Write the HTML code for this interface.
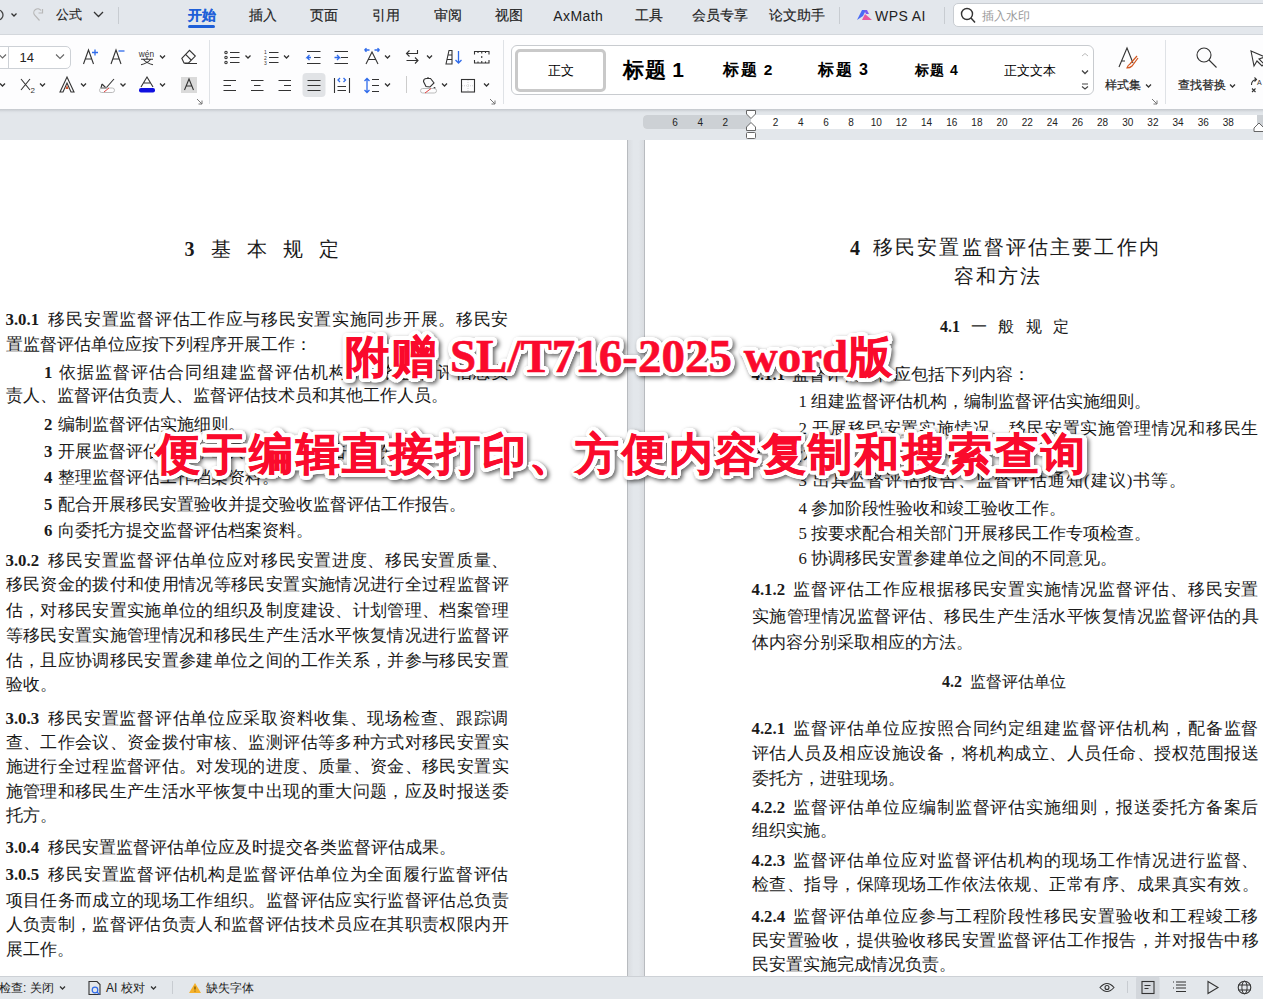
<!DOCTYPE html><html><head><meta charset="utf-8"><style>
*{box-sizing:border-box;margin:0;padding:0}
html,body{width:1263px;height:999px;overflow:hidden}
body{position:relative;background:#e3e7eb;font-family:"Liberation Sans",sans-serif;color:#222}
.a{position:absolute}
.ui{font-family:"Liberation Sans",sans-serif;white-space:nowrap}
.doc{font-family:"Liberation Serif",serif;font-size:16.8px;line-height:20px;color:#1a1a1a;white-space:nowrap}
.j{text-align:justify;text-align-last:justify}
.doc b{font-weight:bold}
.doc i{font-style:normal;font-weight:bold;margin-right:4.5px}
.rp i{margin-right:3px}
.doc u{text-decoration:none;margin-right:1px}
svg{position:absolute;overflow:visible}
.ov{font-family:"Liberation Serif",serif;font-weight:bold;font-size:46px;line-height:50px;white-space:nowrap}
.ovs{color:#fff;-webkit-text-stroke:1.5px #fff;text-shadow:4.30px 0.00px 0 #fff,4.19px 0.96px 0 #fff,3.87px 1.87px 0 #fff,3.36px 2.68px 0 #fff,2.68px 3.36px 0 #fff,1.87px 3.87px 0 #fff,0.96px 4.19px 0 #fff,0.00px 4.30px 0 #fff,-0.96px 4.19px 0 #fff,-1.87px 3.87px 0 #fff,-2.68px 3.36px 0 #fff,-3.36px 2.68px 0 #fff,-3.87px 1.87px 0 #fff,-4.19px 0.96px 0 #fff,-4.30px 0.00px 0 #fff,-4.19px -0.96px 0 #fff,-3.87px -1.87px 0 #fff,-3.36px -2.68px 0 #fff,-2.68px -3.36px 0 #fff,-1.87px -3.87px 0 #fff,-0.96px -4.19px 0 #fff,-0.00px -4.30px 0 #fff,0.96px -4.19px 0 #fff,1.87px -3.87px 0 #fff,2.68px -3.36px 0 #fff,3.36px -2.68px 0 #fff,3.87px -1.87px 0 #fff,4.19px -0.96px 0 #fff,3.00px 0.00px 0 #fff,2.77px 1.15px 0 #fff,2.12px 2.12px 0 #fff,1.15px 2.77px 0 #fff,0.00px 3.00px 0 #fff,-1.15px 2.77px 0 #fff,-2.12px 2.12px 0 #fff,-2.77px 1.15px 0 #fff,-3.00px 0.00px 0 #fff,-2.77px -1.15px 0 #fff,-2.12px -2.12px 0 #fff,-1.15px -2.77px 0 #fff,-0.00px -3.00px 0 #fff,1.15px -2.77px 0 #fff,2.12px -2.12px 0 #fff,2.77px -1.15px 0 #fff,1.60px 0.00px 0 #fff,1.29px 0.94px 0 #fff,0.49px 1.52px 0 #fff,-0.49px 1.52px 0 #fff,-1.29px 0.94px 0 #fff,-1.60px 0.00px 0 #fff,-1.29px -0.94px 0 #fff,-0.49px -1.52px 0 #fff,0.49px -1.52px 0 #fff,1.29px -0.94px 0 #fff;filter:drop-shadow(2px 2.5px 2px rgba(0,0,0,.6))}
.ovf{color:#fa0a2c;-webkit-text-stroke:0.6px #fa0a2c}
</style></head><body>
<div class="a" style="left:0;top:0;width:1263px;height:34px;background:#e3e7ec"></div>
<div class="a" style="left:0;top:34px;width:1263px;height:1px;background:#d3d7dc"></div>
<div class="a ui" style="left:187.5px;top:6.5px;font-size:13.5px;line-height:17.5px;color:#1e5fd8;font-weight:bold;-webkit-text-stroke:0.15px #1e5fd8">开始</div>
<div class="a ui" style="left:249.1px;top:6.5px;font-size:13.5px;line-height:17.5px;color:#222;font-weight:normal;-webkit-text-stroke:0.15px #222">插入</div>
<div class="a ui" style="left:310.3px;top:6.5px;font-size:13.5px;line-height:17.5px;color:#222;font-weight:normal;-webkit-text-stroke:0.15px #222">页面</div>
<div class="a ui" style="left:372.2px;top:6.5px;font-size:13.5px;line-height:17.5px;color:#222;font-weight:normal;-webkit-text-stroke:0.15px #222">引用</div>
<div class="a ui" style="left:433.5px;top:6.5px;font-size:13.5px;line-height:17.5px;color:#222;font-weight:normal;-webkit-text-stroke:0.15px #222">审阅</div>
<div class="a ui" style="left:495.2px;top:6.5px;font-size:13.5px;line-height:17.5px;color:#222;font-weight:normal;-webkit-text-stroke:0.15px #222">视图</div>
<div class="a ui" style="left:553.3px;top:6.5px;font-size:14px;line-height:18px;color:#222;font-weight:normal;letter-spacing:0.4px">AxMath</div>
<div class="a ui" style="left:634.7px;top:6.5px;font-size:13.5px;line-height:17.5px;color:#222;font-weight:normal;-webkit-text-stroke:0.15px #222">工具</div>
<div class="a ui" style="left:691.5px;top:6.5px;font-size:13.5px;line-height:17.5px;color:#222;font-weight:normal;-webkit-text-stroke:0.15px #222">会员专享</div>
<div class="a ui" style="left:769.3px;top:6.5px;font-size:13.5px;line-height:17.5px;color:#222;font-weight:normal;-webkit-text-stroke:0.15px #222">论文助手</div>
<div class="a ui" style="left:875.1px;top:6.5px;font-size:14px;line-height:18px;color:#222;font-weight:normal;letter-spacing:0.4px">WPS AI</div>
<div class="a" style="left:188px;top:25px;width:27px;height:3px;border-radius:2px;background:#1e5fd8"></div>
<div class="a ui" style="left:56px;top:7px;font-size:12.5px;line-height:16.5px;color:#222;font-weight:normal;-webkit-text-stroke:0.15px #222">公式</div>
<div class="a" style="left:118px;top:7px;width:1px;height:17px;background:#c8ccd1"></div>
<div class="a" style="left:838.5px;top:7px;width:1px;height:17px;background:#c8ccd1"></div>
<div class="a" style="left:943.5px;top:7px;width:1px;height:17px;background:#c8ccd1"></div>
<div class="a" style="left:953px;top:3px;width:320px;height:24px;background:#fff;border:1px solid #c9cdd2;border-radius:5px"></div>
<div class="a ui" style="left:982px;top:7.5px;font-size:12.3px;line-height:16.3px;color:#999;font-weight:normal;">插入水印</div>
<svg style="left:0;top:0" width="1263" height="34">
<path d="M-2 10 a5 5 0 1 1 0 10" fill="none" stroke="#444" stroke-width="1.3"/>
<path d="M11.5 13.5 l2.5 2.5 l2.5-2.5" fill="none" stroke="#333" stroke-width="1.3"/>
<path d="M39.5 20.5 L34.5 15 a3.6 3.6 0 0 1 6.5 -4.5" fill="none" stroke="#b8b8b8" stroke-width="1.2"/><path d="M42.5 9 v4 h-4" fill="none" stroke="#b8b8b8" stroke-width="1.2"/>
<path d="M94 12 l4.5 4.5 l4.5-4.5" fill="none" stroke="#333" stroke-width="1.3"/>
<path d="M857 20 l5-10 l4 0 l-3 6 z" fill="#4b6bf5"/><path d="M862 20 l3-6 l7 6 z" fill="#e85aa0"/><path d="M864 10 l3 0 l2 4 l-3 0z" fill="#7a5cf0"/>
<circle cx="967" cy="14" r="5.5" fill="none" stroke="#333" stroke-width="1.4"/><path d="M971 18 l4 4.5" stroke="#333" stroke-width="1.5"/>
</svg>
<div class="a" style="left:0;top:35px;width:1263px;height:74px;background:#fdfdfe"></div>
<div class="a" style="left:208.5px;top:40px;width:1px;height:64px;background:#dfe2e6"></div>
<div class="a" style="left:502.5px;top:40px;width:1px;height:64px;background:#dfe2e6"></div>
<div class="a" style="left:1164.5px;top:40px;width:1px;height:64px;background:#dfe2e6"></div>
<div class="a" style="left:-10px;top:45.5px;width:81px;height:23px;border:1px solid #cdd1d6;border-radius:5px;background:#fff"></div>
<div class="a" style="left:8px;top:46px;width:1px;height:22px;background:#cdd1d6"></div>
<div class="a ui" style="left:19.5px;top:49px;font-size:13px;line-height:17px;color:#222;font-weight:normal;">14</div>
<div class="a" style="left:511px;top:45px;width:583px;height:50px;border:1px solid #c8cbcf;border-radius:6px;background:#fff"></div>
<div class="a" style="left:514.5px;top:48.5px;width:91px;height:43px;border:3px solid #c9c9c9;border-radius:5px;background:#fff"></div>
<div class="a ui" style="left:547.5px;top:63px;font-size:12.5px;line-height:16.5px;color:#000;font-weight:normal;">正文</div>
<div class="a ui" style="left:623px;top:57px;font-size:21px;line-height:25px;color:#000;font-weight:bold;letter-spacing:0.5px">标题 1</div>
<div class="a ui" style="left:723px;top:60px;font-size:15.5px;line-height:19.5px;color:#000;font-weight:bold;letter-spacing:1.5px">标题 2</div>
<div class="a ui" style="left:818px;top:59.5px;font-size:16px;line-height:20px;color:#000;font-weight:bold;letter-spacing:1.5px">标题 3</div>
<div class="a ui" style="left:915px;top:61px;font-size:14px;line-height:18px;color:#000;font-weight:bold;letter-spacing:1px">标题 4</div>
<div class="a ui" style="left:1004px;top:63px;font-size:12.5px;line-height:16.5px;color:#000;font-weight:normal;">正文文本</div>
<div class="a ui" style="left:1105px;top:77px;font-size:12px;line-height:16px;color:#222;font-weight:normal;-webkit-text-stroke:0.2px #222">样式集</div>
<div class="a ui" style="left:1178px;top:77px;font-size:12px;line-height:16px;color:#222;font-weight:normal;-webkit-text-stroke:0.2px #222">查找替换</div>
<svg style="left:0;top:0" width="1263" height="110"><path d="M83.5 64 L88.5 50 L93.5 64 M85.5 59 h6" stroke="#333" stroke-width="1.1" fill="none"/><path d="M92 52.5 h6 M95 49.5 v6" stroke="#2f6bea" stroke-width="1.3" fill="none"/><path d="M111 64 L116 50 L121 64 M113 59 h6" stroke="#333" stroke-width="1.1" fill="none"/><path d="M118.5 51 h6" stroke="#2f6bea" stroke-width="1.3" fill="none"/><path d="M141 59.3 h12 M147 57.3 v2 M143.5 59.5 q3 3.8 9.5 5.2 M150.5 59.5 q-3 3.8 -9.5 5.2" stroke="#333" stroke-width="1.1" fill="none"/><text x="138.8" y="56.6" font-size="8.3" fill="#333" font-family="Liberation Sans">w&#233;n</text><path d="M160 55.5 l2.5 2.5 l2.5 -2.5" fill="none" stroke="#333" stroke-width="1.3"/><path d="M181.8 58.3 l7.7-8 l5.8 5.8 l-6.7 6.9 h-4.6 z M185.6 54.3 l5.5 5.7" stroke="#333" stroke-width="1.1" fill="none"/><path d="M184.5 63.5 h12.5" stroke="#333" stroke-width="1"/><path d="M0 83.5 l2.5 2.5 l2.5 -2.5" fill="none" stroke="#333" stroke-width="1.3"/><path d="M21 79 l9 11 M30 79 l-9 11" stroke="#333" stroke-width="1.1" fill="none"/><text x="30.5" y="93" font-size="8" fill="#333" font-family="Liberation Sans">2</text><path d="M40 83.5 l2.5 2.5 l2.5 -2.5" fill="none" stroke="#333" stroke-width="1.3"/><path d="M60 92 L67 77 L74 92 h-3 l-4-9 l-4 9 z" stroke="#333" stroke-width="1.1" fill="none"/><path d="M65.5 89 l1.5-4 l1.5 4z" fill="#d2502a"/><path d="M81 83.5 l2.5 2.5 l2.5 -2.5" fill="none" stroke="#333" stroke-width="1.3"/><path d="M102 84 l4 4 l8-9 M102 84 l-1 4 h5" stroke="#333" stroke-width="1.1" fill="none"/><rect x="99.5" y="88" width="15" height="4.5" rx="2.2" fill="none" stroke="#bbb" stroke-width="1"/><path d="M104 92 l5-4" stroke="#e04040" stroke-width="1"/><path d="M120.5 83.5 l2.5 2.5 l2.5 -2.5" fill="none" stroke="#333" stroke-width="1.3"/><path d="M141 87 L147 77 L153 87 M143.5 83 h7" stroke="#333" stroke-width="1.1" fill="none"/><rect x="139" y="88" width="16" height="4.5" rx="2" fill="#1010e0"/><path d="M160 83.5 l2.5 2.5 l2.5 -2.5" fill="none" stroke="#333" stroke-width="1.3"/><rect x="181" y="77" width="16" height="16" fill="#dadada"/><path d="M184.5 90 L189 79 L193.5 90 M186 86 h6" stroke="#333" stroke-width="1.1" fill="none"/><path d="M197 99 l5 5 M202 100.5 v3.5 h-3.5" stroke="#777" stroke-width="1" fill="none"/><path d="M56 54.5 l4 4 l4 -4" fill="none" stroke="#666" stroke-width="1.1"/><path d="M-1 54.5 l3.5 3.5 l3.5 -3.5" fill="none" stroke="#666" stroke-width="1.1"/><circle cx="226" cy="52.5" r="1.2" stroke="#333" stroke-width="1.1" fill="none"/><circle cx="226" cy="57.5" r="1.2" stroke="#333" stroke-width="1.1" fill="none"/><circle cx="226" cy="62.5" r="1.2" stroke="#333" stroke-width="1.1" fill="none"/><path d="M230 52.5 h9.5 M230 57.5 h9.5 M230 62.5 h9.5" stroke="#333" stroke-width="1.1" fill="none"/><path d="M245.5 55.5 l2.5 2.5 l2.5 -2.5" fill="none" stroke="#333" stroke-width="1.3"/><text x="264" y="54" font-size="5" fill="#333" font-family="Liberation Sans">1</text><text x="264" y="59.5" font-size="5" fill="#333" font-family="Liberation Sans">2</text><text x="264" y="65" font-size="5" fill="#333" font-family="Liberation Sans">3</text><path d="M269 52.5 h9.5 M269 57.5 h9.5 M269 62.5 h9.5" stroke="#333" stroke-width="1.1" fill="none"/><path d="M284 55.5 l2.5 2.5 l2.5 -2.5" fill="none" stroke="#333" stroke-width="1.3"/><path d="M307 51.5 h13.5 M314 57.5 h6.5 M307 63.5 h13.5" stroke="#333" stroke-width="1.1" fill="none"/><path d="M311 57.5 h-4 l2.5-2.5 M307 57.5 l2.5 2.5" stroke="#2f6bea" stroke-width="1.3" fill="none"/><path d="M334.5 51.5 h13.5 M341 57.5 h7 M334.5 63.5 h13.5" stroke="#333" stroke-width="1.1" fill="none"/><path d="M334.5 57.5 h5 l-2.5-2.5 M339.5 57.5 l-2.5 2.5" stroke="#2f6bea" stroke-width="1.3" fill="none"/><path d="M366 64 L372 52 L378 64 M368.5 59.5 h7" stroke="#333" stroke-width="1.1" fill="none"/><path d="M364.5 50 h5 M364.5 50 l2 -1.8 M364.5 50 l2 1.8 M374.5 50 h5 M379.5 50 l-2 -1.8 M379.5 50 l-2 1.8" stroke="#2f6bea" stroke-width="1.3" fill="none"/><path d="M385 55.5 l2.5 2.5 l2.5 -2.5" fill="none" stroke="#333" stroke-width="1.3"/><path d="M417.5 50 v3.5 h-11 M409.5 50.5 l-3 3 l3 3 M406.5 60.5 h11.5 M415 57.5 l3 3 l-3 3" stroke="#333" stroke-width="1.1" fill="none"/><path d="M427 55.5 l2.5 2.5 l2.5 -2.5" fill="none" stroke="#333" stroke-width="1.3"/><path d="M446 64 l3-13.5 h3 v13.5 z M448.3 55 h3.7 M447.3 59.5 h4.7" stroke="#333" stroke-width="1.1" fill="none"/><path d="M458.5 51 v12 M455.5 60 l3 3 l3 -3" stroke="#2f6bea" stroke-width="1.3" fill="none"/><path d="M474.5 54.5 v-3 h14.5 v3 M478 51.5 v1.5 M481.75 51.5 v2 M485.5 51.5 v1.5 M474.5 60 v3 h14.5 v-3 M478 63 v-1.5 M481.75 63 v-2 M485.5 63 v-1.5 M481.75 56 v2" stroke="#333" stroke-width="1.1" fill="none"/><path d="M223.5 80.5 h12.5 M223.5 85.5 h7.5 M223.5 90.5 h12.5" stroke="#333" stroke-width="1.1" fill="none"/><path d="M251 80.5 h12.5 M254 85.5 h6.5 M251 90.5 h12.5" stroke="#333" stroke-width="1.1" fill="none"/><path d="M278.5 80.5 h12.5 M284 85.5 h7 M278.5 90.5 h12.5" stroke="#333" stroke-width="1.1" fill="none"/><rect x="302.5" y="73" width="23" height="24" rx="4" fill="#e1e3e6"/><path d="M307.5 80.5 h13 M307.5 85.5 h13 M307.5 90.5 h13" stroke="#333" stroke-width="1.1" fill="none"/><path d="M334.5 78 v15 M349.5 78 v15 M337.5 86.5 h8.5 M337.5 90.5 h8.5" stroke="#333" stroke-width="1.1" fill="none"/><path d="M340 78 l-2 2 l2 2 M343.5 78 l2 2 l-2 2" stroke="#2f6bea" stroke-width="1.3" fill="none"/><path d="M367 78.5 v14 M364.5 81 l2.5-2.5 l2.5 2.5 M364.5 90 l2.5 2.5 l2.5-2.5" stroke="#2f6bea" stroke-width="1.3" fill="none"/><path d="M372 79.5 h7 M372 85.5 h7 M372 91.5 h7" stroke="#333" stroke-width="1.1" fill="none"/><path d="M385 83.5 l2.5 2.5 l2.5 -2.5" fill="none" stroke="#333" stroke-width="1.3"/><path d="M406.5 76 v17" stroke="#ccc" stroke-width="1"/><path d="M423.5 81.5 a3 3 0 0 1 3-3 l4 0 l3.5 4.5 l-4 4 l-4 -0.5 z M428 78.5 v-1.5" stroke="#333" stroke-width="1.1" fill="none"/><circle cx="434.5" cy="88" r="1" fill="#333"/><rect x="420.5" y="88.5" width="16" height="4.5" rx="2.2" fill="none" stroke="#bbb" stroke-width="1"/><path d="M425 93 l6-4.5" stroke="#e04040" stroke-width="1"/><path d="M442 83.5 l2.5 2.5 l2.5 -2.5" fill="none" stroke="#333" stroke-width="1.3"/><rect x="461.5" y="79.5" width="13" height="12.5" stroke="#333" stroke-width="1.1" fill="none"/><path d="M468 80 v11.5 M462 85.75 h12" stroke="#bbb" stroke-width=".7" stroke-dasharray="1 1"/><path d="M484 83.5 l2.5 2.5 l2.5 -2.5" fill="none" stroke="#333" stroke-width="1.3"/><path d="M490 99 l5 5 M495 100.5 v3.5 h-3.5" stroke="#777" stroke-width="1" fill="none"/><path d="M1082 56 l3 -2.5 l3 2.5" fill="none" stroke="#bbb" stroke-width="1"/><path d="M1082 70.5 l3.0 3.0 l3.0 -3.0" fill="none" stroke="#444" stroke-width="1.3"/><path d="M1082 84 h6 M1082 86.5 l3 2.5 l3 -2.5" fill="none" stroke="#444" stroke-width="1.1"/><path d="M1119 67 L1127 48 L1133 63 M1122 61 h3" stroke="#333" stroke-width="1.1" fill="none"/><path d="M1137 56 l-7 8 q-2 1 -3 4 q3 0 5 -2 l6-8" stroke="#d2561f" stroke-width="1.2" fill="none"/><path d="M1146 84.5 l2.5 2.5 l2.5 -2.5" fill="none" stroke="#333" stroke-width="1.3"/><path d="M1152 99 l5 5 M1157 100.5 v3.5 h-3.5" stroke="#777" stroke-width="1" fill="none"/><circle cx="1204" cy="55" r="7" stroke="#333" stroke-width="1.1" fill="none"/><path d="M1209 60 l7.5 7.5" stroke="#333" stroke-width="1.1" fill="none"/><path d="M1230 84.5 l2.5 2.5 l2.5 -2.5" fill="none" stroke="#333" stroke-width="1.3"/><path d="M1251 51 l14 6 l-6 2 l5 5 l-2 2 l-5-5 l-3 5 z" stroke="#333" stroke-width="1.1" fill="none"/><path d="M1251.5 85 a5 5 0 0 1 5 -5.5 M1254.5 77.5 l2 2 l-2 2 M1252 88.5 l3.5 3.5 M1255.5 88.5 l-3.5 3.5" stroke="#333" stroke-width="1.1" fill="none"/><text x="1257" y="85" font-size="7" fill="#333" font-family="Liberation Sans">A</text></svg>
<div class="a" style="left:0;top:109px;width:1263px;height:31px;background:#e3e7eb"></div>
<div class="a" style="left:0;top:109px;width:1263px;height:5px;background:linear-gradient(#c4c8cd,#dfe3e7 60%,#e3e7eb)"></div>
<div class="a" style="left:643px;top:115px;width:620px;height:14px;background:#fff;border-radius:4px 0 0 4px"></div>
<div class="a" style="left:643px;top:115px;width:108px;height:14px;background:#cdd1d5;border-radius:4px 0 0 4px"></div>
<div class="a" style="left:1257px;top:115px;width:6px;height:14px;background:#cdd1d5"></div>
<svg style="left:0;top:0" width="1263" height="140"><text x="675.0" y="125.5" text-anchor="middle" font-size="10" fill="#222" font-family="Liberation Sans">6</text><text x="700.2" y="125.5" text-anchor="middle" font-size="10" fill="#222" font-family="Liberation Sans">4</text><text x="725.4" y="125.5" text-anchor="middle" font-size="10" fill="#222" font-family="Liberation Sans">2</text><text x="775.6" y="125.5" text-anchor="middle" font-size="10" fill="#222" font-family="Liberation Sans">2</text><text x="800.8" y="125.5" text-anchor="middle" font-size="10" fill="#222" font-family="Liberation Sans">4</text><text x="826.0" y="125.5" text-anchor="middle" font-size="10" fill="#222" font-family="Liberation Sans">6</text><text x="851.1" y="125.5" text-anchor="middle" font-size="10" fill="#222" font-family="Liberation Sans">8</text><text x="876.2" y="125.5" text-anchor="middle" font-size="10" fill="#222" font-family="Liberation Sans">10</text><text x="901.4" y="125.5" text-anchor="middle" font-size="10" fill="#222" font-family="Liberation Sans">12</text><text x="926.5" y="125.5" text-anchor="middle" font-size="10" fill="#222" font-family="Liberation Sans">14</text><text x="951.7" y="125.5" text-anchor="middle" font-size="10" fill="#222" font-family="Liberation Sans">16</text><text x="976.9" y="125.5" text-anchor="middle" font-size="10" fill="#222" font-family="Liberation Sans">18</text><text x="1002.0" y="125.5" text-anchor="middle" font-size="10" fill="#222" font-family="Liberation Sans">20</text><text x="1027.2" y="125.5" text-anchor="middle" font-size="10" fill="#222" font-family="Liberation Sans">22</text><text x="1052.3" y="125.5" text-anchor="middle" font-size="10" fill="#222" font-family="Liberation Sans">24</text><text x="1077.5" y="125.5" text-anchor="middle" font-size="10" fill="#222" font-family="Liberation Sans">26</text><text x="1102.6" y="125.5" text-anchor="middle" font-size="10" fill="#222" font-family="Liberation Sans">28</text><text x="1127.8" y="125.5" text-anchor="middle" font-size="10" fill="#222" font-family="Liberation Sans">30</text><text x="1152.9" y="125.5" text-anchor="middle" font-size="10" fill="#222" font-family="Liberation Sans">32</text><text x="1178.0" y="125.5" text-anchor="middle" font-size="10" fill="#222" font-family="Liberation Sans">34</text><text x="1203.2" y="125.5" text-anchor="middle" font-size="10" fill="#222" font-family="Liberation Sans">36</text><text x="1228.3" y="125.5" text-anchor="middle" font-size="10" fill="#222" font-family="Liberation Sans">38</text><path d="M746.5 110.5 h9 v3.5 l-4.5 4.5 l-4.5 -4.5 z" fill="#fff" stroke="#666" stroke-width="1"/><path d="M746.5 130.5 h9 v-3.5 l-4.5 -4.5 l-4.5 4.5 z" fill="#fff" stroke="#666" stroke-width="1"/><rect x="746.5" y="132.5" width="9" height="6" rx="1" fill="#fff" stroke="#666" stroke-width="1"/><path d="M1254 131.5 h10 v-3.5 l-5 -5 l-5 5 z" fill="#fff" stroke="#666" stroke-width="1"/></svg>
<div class="a" style="left:0;top:140px;width:627px;height:836px;background:#fff"></div>
<div class="a" style="left:628px;top:140px;width:16px;height:836px;background:linear-gradient(90deg,#dadde1,#e3e7eb 35%,#e3e7eb 65%,#dadde1)"></div>
<div class="a" style="left:627px;top:140px;width:1px;height:836px;background:#b8bbbf"></div>
<div class="a" style="left:644px;top:140px;width:1px;height:836px;background:#b8bbbf"></div>
<div class="a" style="left:645px;top:140px;width:618px;height:836px;background:#fff"></div>
<div class="a" style="left:0;top:976px;width:1263px;height:23px;background:#e3e7eb;border-top:1px solid #cdd1d6"></div>
<div class="a ui" style="left:-1px;top:980px;font-size:12px;line-height:16px;color:#222;font-weight:normal;">检查: 关闭</div>
<div class="a ui" style="left:106px;top:980px;font-size:12px;line-height:16px;color:#222;font-weight:normal;">AI 校对</div>
<div class="a ui" style="left:206px;top:980px;font-size:12px;line-height:16px;color:#222;font-weight:normal;">缺失字体</div>
<svg style="left:0;top:0" width="1263" height="999"><path d="M60 986.5 l2.5 2.5 l2.5 -2.5" fill="none" stroke="#333" stroke-width="1.3"/><path d="M151 986.5 l2.5 2.5 l2.5 -2.5" fill="none" stroke="#333" stroke-width="1.3"/><path d="M172.5 981 v13" stroke="#c8ccd1" stroke-width="1"/><path d="M89 981.5 h8 l3 3 v10 h-11 z" fill="none" stroke="#333" stroke-width="1.1"/><circle cx="95" cy="990" r="2.8" fill="none" stroke="#2f6bea" stroke-width="1.2"/><path d="M97 992 l2.5 2.5" stroke="#2f6bea" stroke-width="1.2"/><path d="M195 983 l6 10 h-12 z" fill="#f5b12a"/><path d="M195 986.5 v3" stroke="#6b4a00" stroke-width="1.2"/><circle cx="195" cy="991" r=".6" fill="#6b4a00"/><path d="M1100 987.5 q7 -8 14 0 q-7 8 -14 0 z" fill="none" stroke="#333" stroke-width="1.1"/><circle cx="1107" cy="987.5" r="2" fill="none" stroke="#333" stroke-width="1.1"/><path d="M1127.5 981 v12" stroke="#c8ccd1" stroke-width="1"/><rect x="1136" y="976.5" width="23.5" height="23" rx="2" fill="#d3d7dc"/><rect x="1142" y="981.5" width="12" height="12" fill="none" stroke="#333" stroke-width="1.1"/><path d="M1144.5 985.5 h6 M1144.5 988.5 h4" stroke="#333" stroke-width="1"/><path d="M1173 982 h1 M1176 982 h10 M1176 985 h10 M1173 988 h1 M1176 988 h10 M1176 991.5 h10" stroke="#333" stroke-width="1.1"/><path d="M1208 981.5 l10 6 l-10 6 z" fill="none" stroke="#333" stroke-width="1.1"/><circle cx="1244.5" cy="987.5" r="6.3" fill="none" stroke="#333" stroke-width="1.1"/><ellipse cx="1244.5" cy="987.5" rx="2.6" ry="6.3" fill="none" stroke="#333" stroke-width="1"/><path d="M1238.2 985 h12.6 M1238.2 990 h12.6" stroke="#333" stroke-width="1"/></svg>
<div class="a doc" style="left:184.5px;top:237.0px;font-size:20px;line-height:24px;font-weight:normal"><b>3</b></div>
<div class="a doc" style="left:210.5px;top:237.0px;font-size:20px;line-height:24px;font-weight:normal">基</div>
<div class="a doc" style="left:246.5px;top:237.0px;font-size:20px;line-height:24px;font-weight:normal">本</div>
<div class="a doc" style="left:282.5px;top:237.0px;font-size:20px;line-height:24px;font-weight:normal">规</div>
<div class="a doc" style="left:318.5px;top:237.0px;font-size:20px;line-height:24px;font-weight:normal">定</div>
<div class="a doc j" style="left:5.5px;top:310.0px;width:503.0px;"><i>3.0.1</i> 移民安置监督评估工作应与移民安置实施同步开展。移民安</div>
<div class="a doc" style="left:5.5px;top:335.2px;">置监督评估单位应按下列程序开展工作：</div>
<div class="a doc j" style="left:44px;top:362.5px;width:464.5px;"><b>1</b><u></u> 依据监督评估合同组建监督评估机构，配备监督评估总负</div>
<div class="a doc" style="left:5.5px;top:385.5px;">责人、监督评估负责人、监督评估技术员和其他工作人员。</div>
<div class="a doc" style="left:44px;top:415.0px;"><b>2</b><u></u> 编制监督评估实施细则。</div>
<div class="a doc" style="left:44px;top:441.8px;"><b>3</b><u></u> 开展监督评估工作，出具监督评估报告、通知等。</div>
<div class="a doc" style="left:44px;top:467.8px;"><b>4</b><u></u> 整理监督评估工作档案资料。</div>
<div class="a doc" style="left:44px;top:494.5px;"><b>5</b><u></u> 配合开展移民安置验收并提交验收监督评估工作报告。</div>
<div class="a doc" style="left:44px;top:521.3px;"><b>6</b><u></u> 向委托方提交监督评估档案资料。</div>
<div class="a doc j" style="left:5.5px;top:550.5px;width:503.0px;"><i>3.0.2</i> 移民安置监督评估单位应对移民安置进度、移民安置质量、</div>
<div class="a doc j" style="left:5.5px;top:575.3px;width:503.0px;">移民资金的拨付和使用情况等移民安置实施情况进行全过程监督评</div>
<div class="a doc j" style="left:5.5px;top:600.5px;width:503.0px;">估，对移民安置实施单位的组织及制度建设、计划管理、档案管理</div>
<div class="a doc j" style="left:5.5px;top:625.5px;width:503.0px;">等移民安置实施管理情况和移民生产生活水平恢复情况进行监督评</div>
<div class="a doc j" style="left:5.5px;top:650.5px;width:503.0px;">估，且应协调移民安置参建单位之间的工作关系，并参与移民安置</div>
<div class="a doc" style="left:5.5px;top:675.3px;">验收。</div>
<div class="a doc j" style="left:5.5px;top:708.7px;width:503.0px;"><i>3.0.3</i> 移民安置监督评估单位应采取资料收集、现场检查、跟踪调</div>
<div class="a doc j" style="left:5.5px;top:732.7px;width:503.0px;">查、工作会议、资金拨付审核、监测评估等多种方式对移民安置实</div>
<div class="a doc j" style="left:5.5px;top:757.2px;width:503.0px;">施进行全过程监督评估。对发现的进度、质量、资金、移民安置实</div>
<div class="a doc j" style="left:5.5px;top:781.5px;width:503.0px;">施管理和移民生产生活水平恢复中出现的重大问题，应及时报送委</div>
<div class="a doc" style="left:5.5px;top:805.7px;">托方。</div>
<div class="a doc" style="left:5.5px;top:837.7px;"><i>3.0.4</i> 移民安置监督评估单位应及时提交各类监督评估成果。</div>
<div class="a doc j" style="left:5.5px;top:865.4px;width:503.0px;"><i>3.0.5</i> 移民安置监督评估机构是监督评估单位为全面履行监督评估</div>
<div class="a doc j" style="left:5.5px;top:890.5px;width:503.0px;">项目任务而成立的现场工作组织。监督评估应实行监督评估总负责</div>
<div class="a doc j" style="left:5.5px;top:914.5px;width:503.0px;">人负责制，监督评估负责人和监督评估技术员应在其职责权限内开</div>
<div class="a doc" style="left:5.5px;top:939.5px;">展工作。</div>
<div class="a doc" style="left:850px;top:235.5px;font-size:20px;line-height:24px"><b>4</b></div>
<div class="a doc" style="left:873px;top:234.5px;font-size:20px;line-height:24px;letter-spacing:2.15px">移民安置监督评估主要工作内</div>
<div class="a doc" style="left:954px;top:264.0px;font-size:20px;line-height:24px;letter-spacing:1.9px">容和方法</div>
<div class="a doc" style="left:940px;top:317.3px;font-size:16px;line-height:20px;font-weight:normal"><b>4.1</b></div>
<div class="a doc" style="left:970.5px;top:317.3px;font-size:16px;line-height:20px;font-weight:normal">一</div>
<div class="a doc" style="left:998px;top:317.3px;font-size:16px;line-height:20px;font-weight:normal">般</div>
<div class="a doc" style="left:1025.5px;top:317.3px;font-size:16px;line-height:20px;font-weight:normal">规</div>
<div class="a doc" style="left:1053px;top:317.3px;font-size:16px;line-height:20px;font-weight:normal">定</div>
<div class="a doc rp" style="left:751.5px;top:365.0px;"><i>4.1.1</i> 监督评估工作应包括下列内容：</div>
<div class="a doc rp" style="left:798.5px;top:391.5px;">1 组建监督评估机构，编制监督评估实施细则。</div>
<div class="a doc j rp" style="left:798.5px;top:418.5px;width:460.0px;">2 开展移民安置实施情况、移民安置实施管理情况和移民生</div>
<div class="a doc rp" style="left:751.5px;top:444.5px;">产生活水平恢复情况监督评估。</div>
<div class="a doc rp" style="left:798.5px;top:471.0px;letter-spacing:1.05px">3 出具监督评估报告、监督评估通知(建议)书等。</div>
<div class="a doc rp" style="left:798.5px;top:498.5px;">4 参加阶段性验收和竣工验收工作。</div>
<div class="a doc rp" style="left:798.5px;top:523.7px;">5 按要求配合相关部门开展移民工作专项检查。</div>
<div class="a doc rp" style="left:798.5px;top:549.3px;">6 协调移民安置参建单位之间的不同意见。</div>
<div class="a doc j rp" style="left:751.5px;top:579.7px;width:507.0px;"><i>4.1.2</i> 监督评估工作应根据移民安置实施情况监督评估、移民安置</div>
<div class="a doc j rp" style="left:751.5px;top:606.7px;width:507.0px;">实施管理情况监督评估、移民生产生活水平恢复情况监督评估的具</div>
<div class="a doc rp" style="left:751.5px;top:633.4px;">体内容分别采取相应的方法。</div>
<div class="a doc" style="left:942px;top:671.5px;font-size:16px"><b>4.2</b>&nbsp;&nbsp;监督评估单位</div>
<div class="a doc j rp" style="left:751.5px;top:718.8px;width:507.0px;"><i>4.2.1</i> 监督评估单位应按照合同约定组建监督评估机构，配备监督</div>
<div class="a doc j rp" style="left:751.5px;top:743.6px;width:507.0px;">评估人员及相应设施设备，将机构成立、人员任命、授权范围报送</div>
<div class="a doc rp" style="left:751.5px;top:768.5px;">委托方，进驻现场。</div>
<div class="a doc j rp" style="left:751.5px;top:797.9px;width:507.0px;"><i>4.2.2</i> 监督评估单位应编制监督评估实施细则，报送委托方备案后</div>
<div class="a doc rp" style="left:751.5px;top:820.7px;">组织实施。</div>
<div class="a doc j rp" style="left:751.5px;top:851.1px;width:507.0px;"><i>4.2.3</i> 监督评估单位应对监督评估机构的现场工作情况进行监督、</div>
<div class="a doc j rp" style="left:751.5px;top:875.2px;width:507.0px;">检查、指导，保障现场工作依法依规、正常有序、成果真实有效。</div>
<div class="a doc j rp" style="left:751.5px;top:906.8px;width:507.0px;"><i>4.2.4</i> 监督评估单位应参与工程阶段性移民安置验收和工程竣工移</div>
<div class="a doc j rp" style="left:751.5px;top:930.5px;width:507.0px;">民安置验收，提供验收移民安置监督评估工作报告，并对报告中移</div>
<div class="a doc rp" style="left:751.5px;top:954.7px;">民安置实施完成情况负责。</div>
<div class="a ov ovs" style="left:345px;top:330.5px"><span style="font-size:44px;letter-spacing:2.6px">附赠</span><span style="font-size:47px;letter-spacing:0px"> SL/T716-2025 word</span><span style="font-size:44px;letter-spacing:2.6px">版</span></div>
<div class="a ov ovf" style="left:345px;top:330.5px"><span style="font-size:44px;letter-spacing:2.6px">附赠</span><span style="font-size:47px;letter-spacing:0px"> SL/T716-2025 word</span><span style="font-size:44px;letter-spacing:2.6px">版</span></div>
<div class="a ov ovs" style="left:156px;top:428.5px"><span style="font-size:44px;letter-spacing:2.6px">便于编辑直接打印、方便内容复制和搜索查询</span></div>
<div class="a ov ovf" style="left:156px;top:428.5px"><span style="font-size:44px;letter-spacing:2.6px">便于编辑直接打印、方便内容复制和搜索查询</span></div>
</body></html>
